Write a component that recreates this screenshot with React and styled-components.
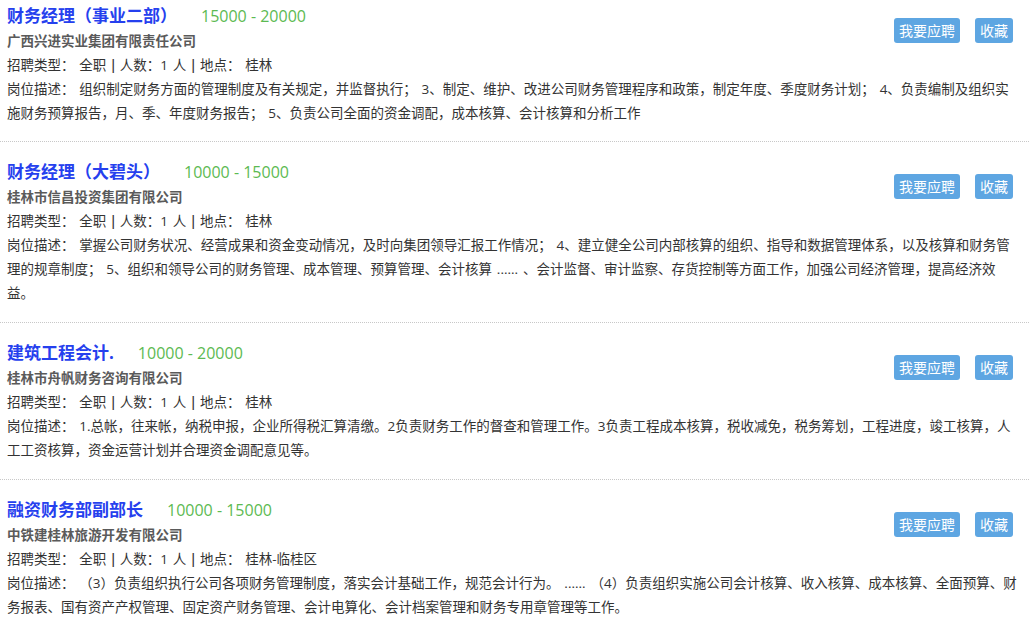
import React from 'react';
import styled, { createGlobalStyle } from 'styled-components';

const GlobalStyle = createGlobalStyle`
  html, body {
    margin: 0;
    padding: 0;
    background: #fff;
  }
  body {
    font-family: "Open Sans", "Noto Sans CJK SC", sans-serif;
    color: #333;
  }
`;

const jobs = [
  {
    title: '财务经理（事业二部）',
    salary: '15000 - 20000',
    company: '广西兴进实业集团有限责任公司',
    place: '桂林',
    desc: '组织制定财务方面的管理制度及有关规定，并监督执行； 3、制定、维护、改进公司财务管理程序和政策，制定年度、季度财务计划； 4、负责编制及组织实施财务预算报告，月、季、年度财务报告； 5、负责公司全面的资金调配，成本核算、会计核算和分析工作',
  },
  {
    title: '财务经理（大碧头）',
    salary: '10000 - 15000',
    company: '桂林市信昌投资集团有限公司',
    place: '桂林',
    desc: '掌握公司财务状况、经营成果和资金变动情况，及时向集团领导汇报工作情况； 4、建立健全公司内部核算的组织、指导和数据管理体系，以及核算和财务管理的规章制度； 5、组织和领导公司的财务管理、成本管理、预算管理、会计核算 ...... 、会计监督、审计监察、存货控制等方面工作，加强公司经济管理，提高经济效益。',
  },
  {
    title: '建筑工程会计.',
    salary: '10000 - 20000',
    company: '桂林市舟帆财务咨询有限公司',
    place: '桂林',
    desc: '1.总帐，往来帐，纳税申报，企业所得税汇算清缴。2负责财务工作的督查和管理工作。3负责工程成本核算，税收减免，税务筹划，工程进度，竣工核算，人工工资核算，资金运营计划并合理资金调配意见等。',
  },
  {
    title: '融资财务部副部长',
    salary: '10000 - 15000',
    company: '中铁建桂林旅游开发有限公司',
    place: '桂林-临桂区',
    desc: '（3）负责组织执行公司各项财务管理制度，落实会计基础工作，规范会计行为。 ...... （4）负责组织实施公司会计核算、收入核算、成本核算、全面预算、财务报表、国有资产产权管理、固定资产财务管理、会计电算化、会计档案管理和财务专用章管理等工作。',
  },
];

const App = () => {
  return (
    <>
      <GlobalStyle />
      <List>
        {jobs.map((job) => (
          <Item key={job.title}>
            <Head>
              <Info>
                <TitleRow>
                  <Title>{job.title}</Title>
                  <Salary>{job.salary}</Salary>
                </TitleRow>
                <Company>{job.company}</Company>
                <Meta>
                  招聘类型： 全职 <Bar>|</Bar> 人数：1 人 <Bar>|</Bar> 地点： {job.place}
                </Meta>
              </Info>
              <Actions>
                <ActionButton>我要应聘</ActionButton>
                <ActionButton>收藏</ActionButton>
              </Actions>
            </Head>
            <Desc>岗位描述： {job.desc}</Desc>
          </Item>
        ))}
      </List>
    </>
  );
};

export default App;

/*======================== list design ============= */

const List = styled.div`
  width: 1029px;
`;

const Item = styled.div`
  padding: 17px 10px 17px 7px;
  border-bottom: 1px dotted #c8c8c8;

  &:first-child {
    padding-top: 3px;
    padding-bottom: 16px;
  }
`;

const Head = styled.div`
  display: flex;
  justify-content: space-between;
  align-items: flex-start;
`;

const Info = styled.div`
  display: flex;
  flex-direction: column;
`;

const TitleRow = styled.div`
  display: flex;
  align-items: baseline;
  height: 26px;
  line-height: 26px;
`;

const Title = styled.span`
  font-size: 17px;
  font-weight: bold;
  color: #2540ee;
`;

const Salary = styled.span`
  margin-left: 24px;
  font-size: 16px;
  color: #5cba52;
`;

const SmallText = styled.div`
  font-size: 13.5px;
  word-spacing: 1.3px;
  line-height: 24px;
  color: #333;
`;

const Company = styled(SmallText)`
  font-weight: bold;
  color: #5a5a5a;
`;

const Meta = styled(SmallText)``;

const Bar = styled.span`
  font-family: "Liberation Sans", sans-serif;
  font-size: 15px;
  color: #333;
`;

const Actions = styled.div`
  display: flex;
  gap: 15px;
  margin-top: 15px;
  margin-right: 6px;
`;

const ActionButton = styled.button`
  height: 25px;
  padding: 0 5px;
  border: none;
  border-radius: 3px;
  background: #5ea6e2;
  color: #fff;
  font-family: "Noto Sans CJK SC", sans-serif;
  font-size: 14px;
  line-height: 25px;
  cursor: pointer;
`;

const Desc = styled(SmallText)``;
